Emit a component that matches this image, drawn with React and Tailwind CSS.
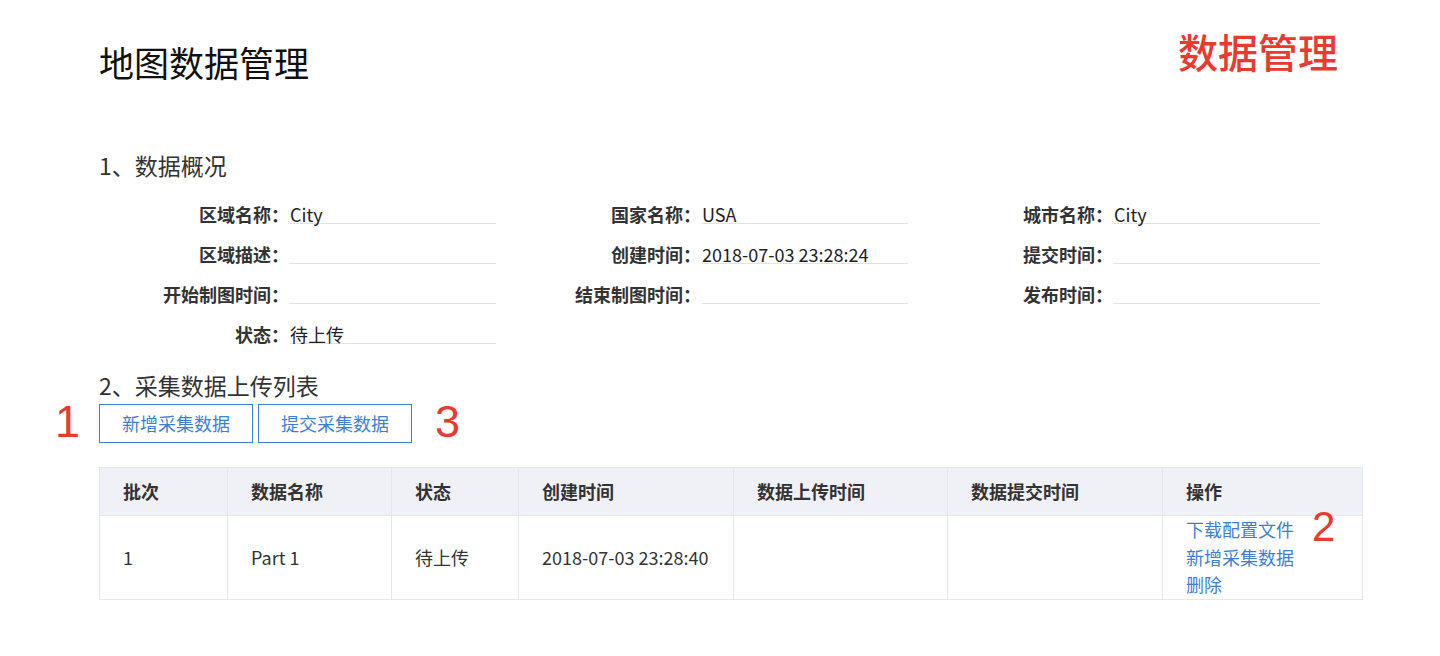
import React from 'react'

const font = { fontFamily: '"Noto Sans CJK SC", "Noto Sans", sans-serif' }
const digitFont = { fontFamily: '"Liberation Sans", Arial, sans-serif' }

const overview = [
  [
    { label: '区域名称：', value: 'City' },
    { label: '国家名称：', value: 'USA' },
    { label: '城市名称：', value: 'City' },
  ],
  [
    { label: '区域描述：', value: '' },
    { label: '创建时间：', value: '2018-07-03 23:28:24' },
    { label: '提交时间：', value: '' },
  ],
  [
    { label: '开始制图时间：', value: '' },
    { label: '结束制图时间：', value: '' },
    { label: '发布时间：', value: '' },
  ],
  [{ label: '状态：', value: '待上传' }],
]

const columns = ['批次', '数据名称', '状态', '创建时间', '数据上传时间', '数据提交时间', '操作']
const row = ['1', 'Part 1', '待上传', '2018-07-03 23:28:40', '', '']

function Field({ label, value }) {
  return (
    <div className="flex items-center h-[40px]">
      <div className="w-[190px] text-right font-bold text-[18px] leading-[18px] text-[#333]">{label}</div>
      <div className="ml-px w-[206px] h-[19px] text-[18px] leading-[18px] text-[#222] border-b border-[#e2e2e2] whitespace-nowrap">
        {value}
      </div>
    </div>
  )
}

export default function App() {
  return (
    <div className="min-h-screen bg-white pl-[99px] pr-[78px] pt-[27px]" style={font}>
      <div className="flex items-start justify-between pr-[24px]">
        <h1 className="mt-[13px] text-[35px] leading-[44px] text-[#111] font-normal">地图数据管理</h1>
        <div className="text-[40px] leading-[48px] text-[#e93a2e] font-medium">数据管理</div>
      </div>

      <h2 className="mt-[66px] text-[23px] leading-[30px] text-[#333]">1、数据概况</h2>
      <div className="mt-[14px] flex flex-col">
        {overview.map((r, i) => (
          <div key={i} className="grid grid-cols-[397px_397px_397px] gap-x-[15px]">
            {r.map((f) => (
              <Field key={f.label} label={f.label} value={f.value} />
            ))}
          </div>
        ))}
      </div>

      <h2 className="mt-[16px] text-[23px] leading-[30px] text-[#333]">2、采集数据上传列表</h2>
      <div className="relative mt-[4px] flex gap-[5px]">
        <span className="absolute left-[-44px] top-[-5px] text-[45px] leading-none text-[#e93a2e]" style={digitFont}>1</span>
        <button className="w-[154px] h-[39px] border border-[#3c7fd6] text-[#3c7fd6] text-[18px] bg-white">新增采集数据</button>
        <button className="w-[154px] h-[39px] border border-[#3c7fd6] text-[#3c7fd6] text-[18px] bg-white">提交采集数据</button>
        <span className="absolute left-[336px] top-[-5px] text-[45px] leading-none text-[#e93a2e]" style={digitFont}>3</span>
      </div>

      <div className="mt-[24px] w-[1264px] border-l border-t border-[#e3e7ee]">
        <div className="grid grid-cols-[128px_164px_127px_215px_214px_215px_200px] bg-[#eff1f6]">
          {columns.map((c) => (
            <div key={c} className="h-[48px] flex items-center pl-[23px] border-r border-b border-[#e3e7ee] font-bold text-[18px] text-[#333]">
              {c}
            </div>
          ))}
        </div>
        <div className="grid grid-cols-[128px_164px_127px_215px_214px_215px_200px]">
          {row.map((v, i) => (
            <div key={i} className="h-[84px] flex items-center pl-[23px] border-r border-b border-[#e3e7ee] text-[18px] text-[#333] whitespace-nowrap">
              {v}
            </div>
          ))}
          <div className="relative h-[84px] flex flex-col justify-center pl-[23px] border-r border-b border-[#e3e7ee] text-[18px] leading-[27.5px] text-[#3c7fd6]">
            <a href="#">下载配置文件</a>
            <a href="#">新增采集数据</a>
            <a href="#">删除</a>
            <span className="absolute left-[149px] top-[-10px] text-[42px] leading-none text-[#e93a2e]" style={digitFont}>2</span>
          </div>
        </div>
      </div>
    </div>
  )
}
